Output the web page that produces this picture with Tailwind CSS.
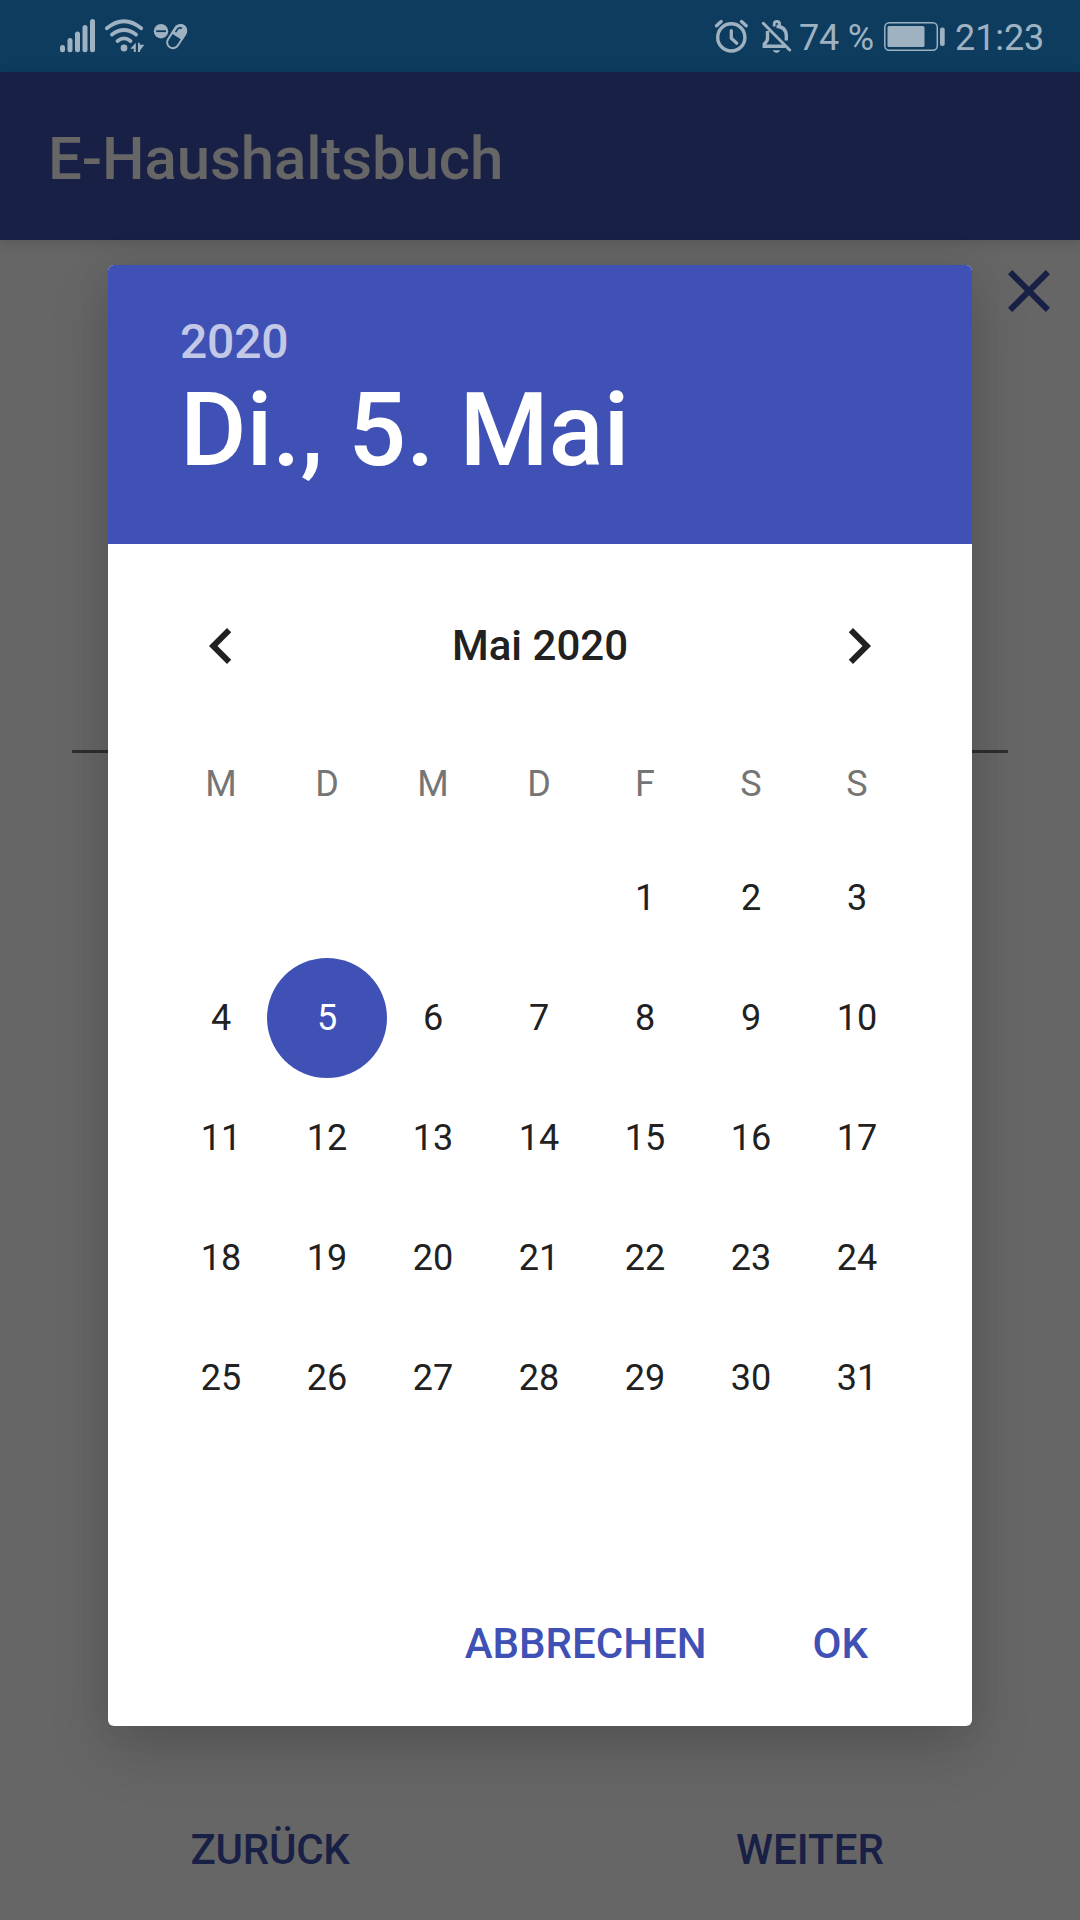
<!DOCTYPE html>
<html lang="de">
<head>
<meta charset="utf-8">
<title>E-Haushaltsbuch</title>
<script src="https://cdn.jsdelivr.net/npm/@tailwindcss/browser@4"></script>
</head>
<body class="bg-[#666666] overflow-hidden">
<div class="relative flex h-[1920px] w-[1080px] flex-col overflow-hidden bg-[#666666] font-['Roboto',sans-serif]">
  <!-- status bar -->
  <header class="flex h-[72px] shrink-0 justify-between bg-[#0d3c5f] text-[#9fb2c1]">
    <svg class="h-[72px] w-[200px]" viewBox="0 0 200 72" fill="currentColor">
      <rect x="60" y="45" width="5" height="7.300" rx="2.500"/>
      <rect x="67.500" y="38" width="5" height="14.300" rx="2.500"/>
      <rect x="75" y="31.500" width="5" height="20.800" rx="2.500"/>
      <rect x="82.500" y="25" width="5" height="27.300" rx="2.500"/>
      <rect x="90" y="19" width="5" height="33.300" rx="2.500"/>
      <g fill="none" stroke="currentColor" stroke-width="3.800" stroke-linecap="round">
        <path d="M106.800 28.200Q124 14.200 141.200 28.200"/>
        <path d="M112 34.600Q124 25.400 136 34.600"/>
        <path d="M117.500 41Q124 35.800 130.500 41"/>
      </g>
      <circle cx="124" cy="48" r="3.400"/>
      <path d="M135.800 42.700V52h-2v-3.300H130.300ZM138 42.700h1.800v2H144.300L140 50.500V52H138Z"/>
      <g transform="rotate(33 176.700 36.600)">
        <rect x="170.900" y="23.900" width="11.600" height="25.400" rx="5.800" fill="none" stroke="currentColor" stroke-width="2"/>
        <path d="M170 36.600V29.700a6.700 6.700 0 0 1 13.400 0V36.600Z"/>
        <path d="M173.300 33.500V30.200a3.400 3.400 0 0 1 3.400-3.400" fill="none" stroke="#0d3c5f" stroke-width="1.700"/>
      </g>
      <circle cx="161" cy="31.200" r="7.200"/>
      <path d="M156.200 31.200h9.800" stroke="#0d3c5f" stroke-width="1.800"/>
    </svg>
    <div class="flex pr-9 text-[36px] leading-[76px]">
      <svg class="h-[72px] w-[85px]" viewBox="714 0 85 72" fill="none" stroke="currentColor" stroke-width="3.400">
        <circle cx="731.300" cy="37.400" r="13.600"/>
        <path d="M731.300 30.500V38.200L736.800 43.200" stroke-width="3.200" stroke-linecap="round"/>
        <path d="M716.500 25.800L721.200 21.600M746.200 25.800L741.500 21.600" stroke-linecap="round"/>
        <path d="M767.500 31V38.500Q767.500 41 764.300 44V46.200H785M776.500 26.200Q786.300 27 786.300 36V40.500"/>
        <path d="M774.200 26.500V24.200a2.700 2.700 0 0 1 5.400 0V26.500" stroke-width="2.800"/>
        <path d="M763.300 23.300L789.700 50" stroke-width="3" stroke-linecap="round"/>
        <path d="M772.700 50.300h7.600q-1.200 2.800-3.800 2.800t-3.800-2.800Z" fill="currentColor" stroke="none"/>
      </svg>
      <span class="w-[84px] whitespace-nowrap tracking-[-0.2px]">74 %</span>
      <svg class="h-[72px] w-[72px]" viewBox="883 0 72 72" fill="currentColor">
        <rect x="884.800" y="22.800" width="52.500" height="27.400" rx="4.500" fill="none" stroke="currentColor" stroke-width="1.500"/>
        <rect x="887.500" y="26" width="37" height="21" rx="1.500"/>
        <rect x="940" y="27.500" width="4.700" height="18.500" rx="2"/>
      </svg>
      <span class="w-[89px] whitespace-nowrap tracking-[-0.1px]">21:23</span>
    </div>
  </header>
  <!-- app bar -->
  <div class="flex h-[168px] shrink-0 items-center bg-[#192046] pl-12 text-[60px] font-medium leading-none tracking-[-0.12px] text-[#666666] shadow-[0_3px_12px_rgba(0,0,0,0.14)]">
    <h1 class="pt-1.5">E-Haushaltsbuch</h1>
  </div>
  <!-- page behind the dialog -->
  <main class="flex grow flex-col text-[#192046]">
    <div class="flex justify-end pt-[15px] pr-[15px]">
      <svg class="size-[72px]" viewBox="0 0 24 24" fill="currentColor"><path d="M19 6.410 17.590 5 12 10.590 6.410 5 5 6.410 10.590 12 5 17.590 6.410 19 12 13.410 17.590 19 19 17.590 13.410 12z"/></svg>
    </div>
    <div class="mx-[72px] mt-[423px] h-[3px] bg-[#2f2f2f]"></div>
    <div class="mt-auto grid h-[144px] grid-cols-2 text-center text-[42px] font-medium leading-[148px]">
      <span class="tracking-[-0.25px]">ZURÜCK</span><span>WEITER</span>
    </div>
  </main>
  <!-- date picker dialog -->
  <section class="absolute top-[265px] left-[108px] flex h-[1461px] w-[864px] flex-col overflow-hidden rounded-[6px] bg-white text-[#212121] shadow-[0_24px_60px_rgba(0,0,0,0.17),0_0_36px_rgba(0,0,0,0.06)]">
    <div class="h-[279px] shrink-0 bg-[#3f51b5] px-[72px] pt-[49px] font-medium text-white">
      <div class="text-[48px] leading-[56px] tracking-[-0.2px] text-white/70">2020</div>
      <div class="text-[102px] leading-[120px] tracking-[-0.15px]">Di., 5. Mai</div>
    </div>
    <div class="flex h-[204px] shrink-0 items-center justify-between px-[77px]">
      <svg class="size-[72px]" viewBox="0 0 24 24" fill="currentColor"><path d="M15.410 7.410 14 6l-6 6 6 6 1.410-1.410L10.830 12z"/></svg>
      <span class="pb-0.5 text-[42px] font-medium">Mai 2020</span>
      <svg class="size-[72px]" viewBox="0 0 24 24" fill="currentColor"><path d="M10 6 8.590 7.410 13.170 12l-4.580 4.590L10 18l6-6z"/></svg>
    </div>
    <div class="ml-[60px] grid w-[742px] grid-cols-7 text-center text-[36px] leading-[72px] text-[#757575]">
      <span>M</span><span>D</span><span>M</span><span>D</span><span>F</span><span>S</span><span>S</span>
    </div>
    <div class="mt-[18px] ml-[60px] grid w-[742px] grid-cols-7 text-center text-[36px] leading-[120px]">
      <span class="col-start-5">1</span><span>2</span><span>3</span>
      <span>4</span><span class="-mx-[7px] size-[120px] rounded-full bg-[#3f51b5] text-white">5</span><span>6</span><span>7</span><span>8</span><span>9</span><span>10</span>
      <span>11</span><span>12</span><span>13</span><span>14</span><span>15</span><span>16</span><span>17</span>
      <span>18</span><span>19</span><span>20</span><span>21</span><span>22</span><span>23</span><span>24</span>
      <span>25</span><span>26</span><span>27</span><span>28</span><span>29</span><span>30</span><span>31</span>
    </div>
    <div class="mt-auto flex h-[156px] justify-end gap-[106px] pr-[104px] text-[42px] font-medium leading-[148px] text-[#3f51b5]">
      <span>ABBRECHEN</span><span>OK</span>
    </div>
  </section>
</div>
</body>
</html>
